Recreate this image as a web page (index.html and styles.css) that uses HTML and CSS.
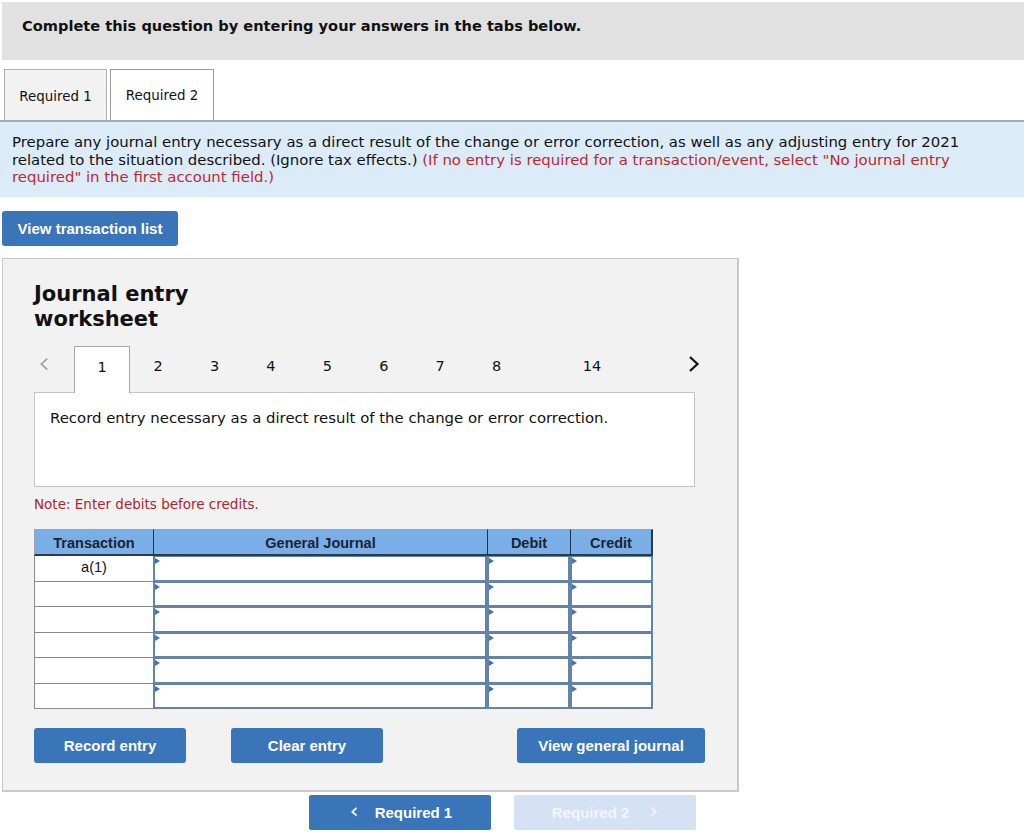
FILE: index.html
```html
<!DOCTYPE html>
<html>
<head>
<meta charset="utf-8">
<link rel="stylesheet" href="styles.css">
</head>
<body>
<div class="header">Complete this question by entering your answers in the tabs below.</div>

<div class="tabs">
  <div class="tab tab-inactive">Required 1</div>
  <div class="tab tab-active">Required 2</div>
</div>

<div class="instructions">Prepare any journal entry necessary as a direct result of the change or error correction, as well as any adjusting entry for 2021 related to the situation described. (Ignore tax effects.) <span class="red">(If no entry is required for a transaction/event, select "No journal entry required" in the first account field.)</span></div>

<div class="btn btn-list">View transaction list</div>

<div class="panel">
  <div class="title">Journal entry<br>worksheet</div>

  <div class="pager">
    <div class="pg-prev">&lsaquo;</div>
    <div class="pg-item pg-current">1</div>
    <div class="pg-item">2</div>
    <div class="pg-item">3</div>
    <div class="pg-item">4</div>
    <div class="pg-item">5</div>
    <div class="pg-item">6</div>
    <div class="pg-item">7</div>
    <div class="pg-item">8</div>
    <div class="pg-item pg-far">14</div>
    <div class="pg-next">
      <svg width="12" height="18" viewBox="0 0 12 18"><path d="M2 2 L9.5 9 L2 16" fill="none" stroke="#111" stroke-width="2.2"/></svg>
    </div>
  </div>

  <div class="desc">Record entry necessary as a direct result of the change or error correction.</div>

  <div class="note">Note: Enter debits before credits.</div>

  <div class="grid">
    <div class="th th-first">Transaction</div>
    <div class="th">General Journal</div>
    <div class="th">Debit</div>
    <div class="th th-last">Credit</div>

    <div class="td-trans">a(1)</div><div class="inp"></div><div class="inp"></div><div class="inp"></div>
    <div class="td-trans"></div><div class="inp"></div><div class="inp"></div><div class="inp"></div>
    <div class="td-trans"></div><div class="inp"></div><div class="inp"></div><div class="inp"></div>
    <div class="td-trans"></div><div class="inp"></div><div class="inp"></div><div class="inp"></div>
    <div class="td-trans"></div><div class="inp"></div><div class="inp"></div><div class="inp"></div>
    <div class="td-trans"></div><div class="inp"></div><div class="inp"></div><div class="inp"></div>
  </div>

  <div class="actions">
    <div class="btn btn-record">Record entry</div>
    <div class="btn btn-clear">Clear entry</div>
    <div class="btn btn-view">View general journal</div>
  </div>
</div>

<div class="nav">
  <div class="btn nav-btn"><span class="chev chev-l">&lsaquo;</span>Required 1</div>
  <div class="btn nav-btn nav-disabled">Required 2<span class="chev chev-r">&rsaquo;</span></div>
</div>
</body>
</html>
```

FILE: styles.css
```css
* { box-sizing: border-box; }

body {
  margin: 0;
  font-family: "DejaVu Sans", Verdana, sans-serif;
  color: #111;
  background: #fff;
}

.header {
  margin: 2px 0 0 2px;
  height: 58px;
  background: #e1e1e1;
  padding: 14px 0 0 20px;
  font-weight: bold;
  font-size: 14.6px;
  line-height: 19px;
}

.tabs {
  display: flex;
  margin-top: 9px;
  padding-left: 4px;
  border-bottom: 2px solid #a9a9a9;
  height: 53px;
}

.tab {
  width: 104px;
  height: 51px;
  border: 1px solid #b0b0b0;
  border-bottom: none;
  font-size: 13.4px;
  line-height: 16px;
  text-align: center;
}

.tab-inactive {
  width: 103px;
  background: #f2f2f2;
  padding-top: 19px;
}

.tab-active {
  background: #fff;
  margin-left: 3px;
  padding-top: 18px;
  border-color: #999;
}

.instructions {
  background: #dcebf8;
  padding: 12px 12px 0 12px;
  font-size: 14.9px;
  line-height: 17.6px;
  height: 75px;
}

.red { color: #c1272d; }

.btn {
  background: #3a74b9;
  color: #fff;
  font-family: "Liberation Sans", Arial, sans-serif;
  font-weight: bold;
  font-size: 15px;
  border-radius: 3px;
  display: flex;
  align-items: center;
  justify-content: center;
  height: 35px;
}

.btn-list {
  margin: 14px 0 0 2px;
  width: 176px;
}

.panel {
  margin: 12px 0 0 2px;
  width: 737px;
  background: #f2f2f2;
  border: 1px solid #c9c9c9;
  border-right-width: 2px;
  border-bottom-width: 2px;
  padding: 23px 0 27px 31px;
}

.title {
  font-size: 21px;
  font-weight: bold;
  line-height: 25px;
}

.pager {
  display: flex;
  align-items: flex-start;
  margin-top: 14px;
  height: 47px;
  width: 668px;
  font-size: 14.5px;
  position: relative;
  z-index: 1;
  margin-bottom: -1px;
}

.pg-prev {
  width: 40px;
  padding: 4px 0 0 4px;
  font-size: 30px;
  line-height: 26px;
  color: #999;
  font-weight: 200;
}

.pg-item {
  width: 56.4px;
  height: 47px;
  text-align: center;
  padding-top: 11px;
  line-height: 18px;
}

.pg-current {
  background: #fff;
  border: 1px solid #a8a8a8;
  border-bottom: none;
  width: 56px;
}

.pg-far { margin-left: 39px; }

.pg-next {
  margin-left: auto;
  padding: 9px 2px 0 0;
}

.desc {
  width: 661px;
  height: 95px;
  background: #fff;
  border: 1px solid #c5c5c5;
  padding: 16px 0 0 15px;
  font-size: 14.9px;
  line-height: 18px;
}

.note {
  margin-top: 9px;
  font-size: 13.5px;
  line-height: 16px;
  color: #b3222a;
}

.grid {
  margin-top: 17px;
  display: grid;
  grid-template-columns: 119px 334px 83px 83px;
  grid-auto-rows: 25.5px;
  grid-template-rows: 27px;
  width: 619px;
}

.th {
  background: #7aaee6;
  border-top: 1px solid #9aa5b0;
  border-bottom: 2px solid #2a3b4f;
  border-left: 1px solid #22344a;
  font-family: "Liberation Sans", Arial, sans-serif;
  font-weight: bold;
  font-size: 14.5px;
  color: #1b2430;
  display: flex;
  align-items: center;
  justify-content: center;
  padding-top: 1px;
}

.th-first { border-left: 1px solid #9aa5b0; }
.th-last { border-right: 2px solid #2a3b4f; }

.td-trans {
  background: #fff;
  border-left: 1px solid #8a8a8a;
  border-bottom: 1px solid #8a8a8a;
  font-family: "Liberation Sans", Arial, sans-serif;
  font-size: 14.5px;
  text-align: center;
  padding-top: 3px;
}

.inp {
  background: #fff;
  border: 2px solid #6483a8;
  border-top-width: 1px;
  border-bottom-width: 2px;
  position: relative;
}

.inp::before {
  content: "";
  position: absolute;
  left: 0;
  top: 1px;
  border-left: 5px solid #3d74b8;
  border-top: 3.5px solid transparent;
  border-bottom: 3.5px solid transparent;
}

.actions {
  display: flex;
  margin-top: 19px;
}

.btn-record { width: 152px; }
.btn-clear { width: 152px; margin-left: 45px; }
.btn-view { width: 188px; margin-left: 134px; }

.nav {
  display: flex;
  margin: 3px 0 0 309px;
  gap: 23px;
}

.nav-btn {
  width: 182px;
  height: 35px;
  border-radius: 2px;
}

.chev {
  font-family: "DejaVu Sans", sans-serif;
  font-weight: normal;
  font-size: 22px;
  line-height: 20px;
  padding-bottom: 3px;
}

.chev-l { margin-right: 16px; margin-left: 2px; }
.chev-r { margin-left: 20px; }

.nav-disabled {
  background: #d4e2f3;
  color: #f1f6fc;
}
```
